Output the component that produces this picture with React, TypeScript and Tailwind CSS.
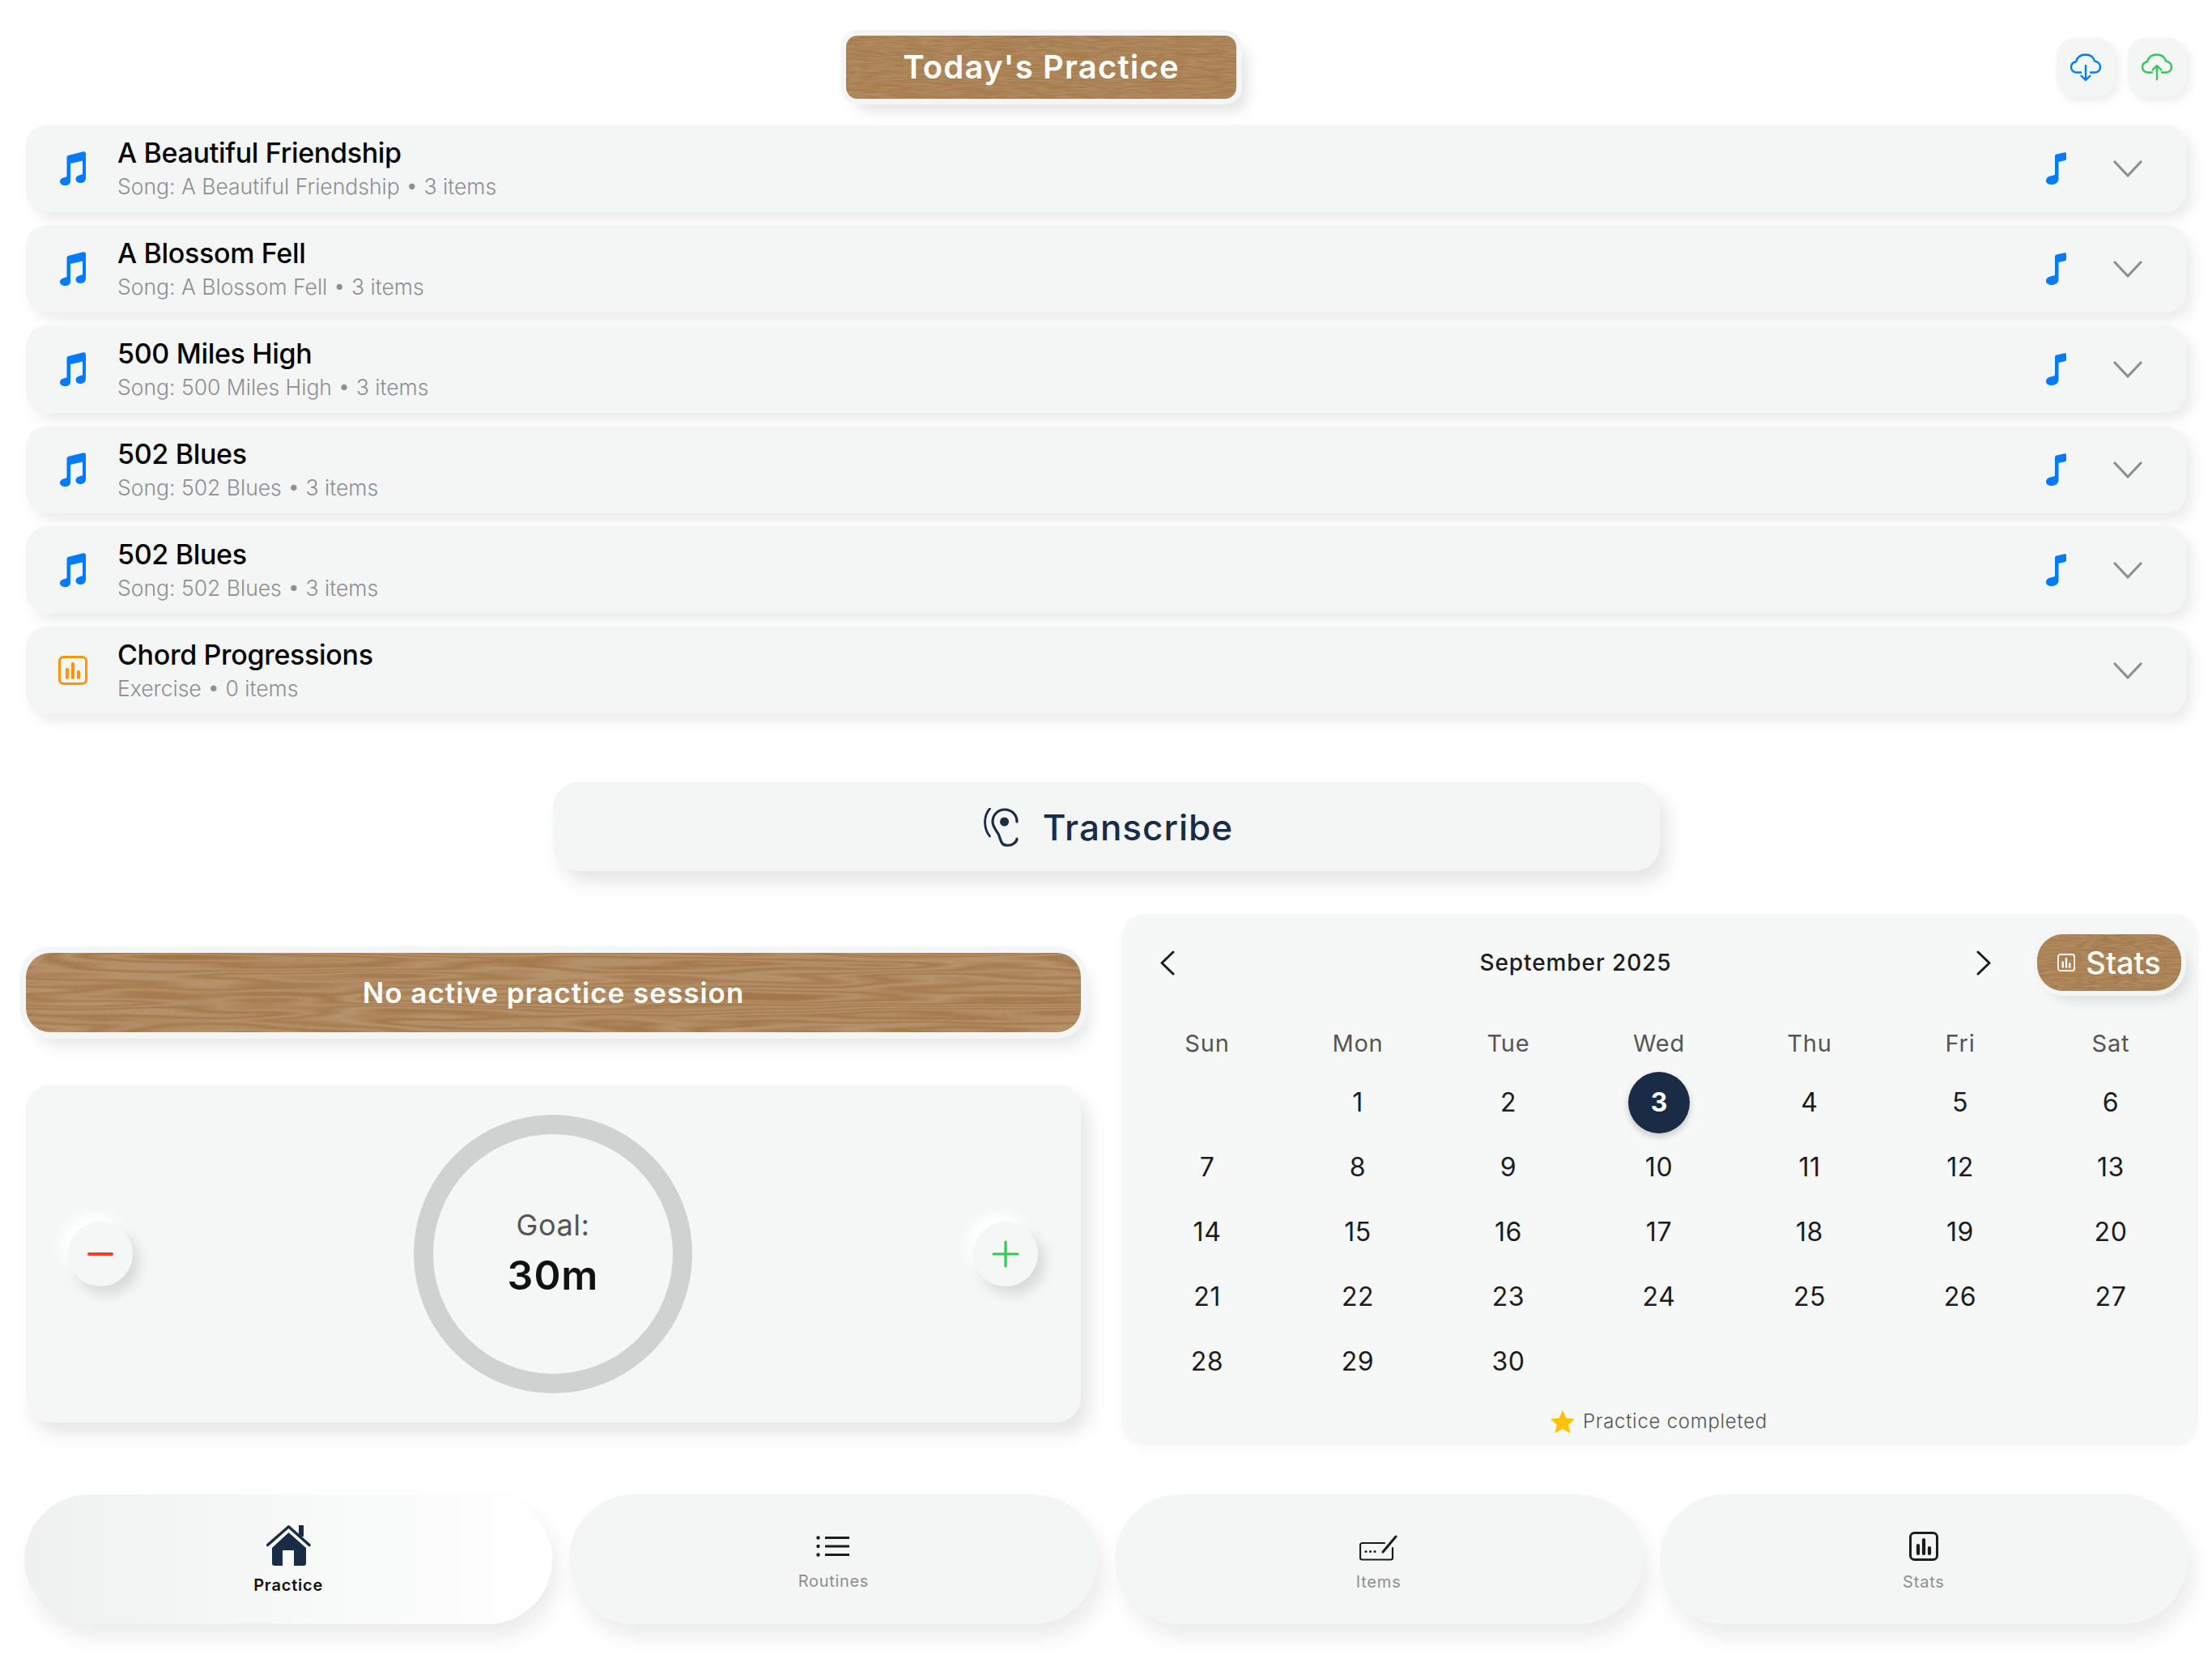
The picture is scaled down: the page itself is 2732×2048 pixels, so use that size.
import React from "react";

const NAVY = "#1a2b45";

const bands = [0, 0, 0, 0.1, 0.9, 0.15, 1, 0.1, 0.85, 0.2, 1, 0.1, 0.9, 0.1, 0.8, 0, 0, 0];
const table = (a: number, b: number) => bands.map((t) => (a + (b - a) * t).toFixed(3)).join(" ");

function Wood({ id, freq, seed, light, octaves }: { id: string; freq: string; seed: number; light: number[]; octaves: number }) {
  const dark = [0.635, 0.47, 0.29];
  return (
    <svg className="absolute inset-0 w-full h-full" aria-hidden="true">
      <filter id={id} x="0" y="0" width="100%" height="100%" colorInterpolationFilters="sRGB">
        <feTurbulence type="fractalNoise" baseFrequency={freq} numOctaves={octaves} seed={seed} />
        <feColorMatrix type="matrix" values="1 0 0 0 0 1 0 0 0 0 1 0 0 0 0 0 0 0 0 1" />
        <feComponentTransfer>
          <feFuncR type="table" tableValues={table(dark[0], light[0])} />
          <feFuncG type="table" tableValues={table(dark[1], light[1])} />
          <feFuncB type="table" tableValues={table(dark[2], light[2])} />
          <feFuncA type="linear" slope={0} intercept={1} />
        </feComponentTransfer>
      </filter>
      <rect width="100%" height="100%" filter={`url(#${id})`} />
    </svg>
  );
}

function DoubleNote() {
  return (
    <svg width="32" height="42" viewBox="0 0 32 42" fill="#007aff" className="shrink-0">
      <path d="M8.5 8C8.5 6.3 9.5 5.2 11 4.8L29 .3C30.6-.1 32 .9 32 2.6V32.5C32 37 28.6 39 25.5 39 22.5 39 19.5 37.5 19.5 34.300 19.500 31.400 21.600 29.900 24.600 29.200L27 28.600C27.600 28.500 28 28 28 27.300V11.500L13 15V37C13 40 10 42 6.500 42 3 42 0 40.500 0 37.300 0 34.400 2.100 32.900 5.100 32.200L7.500 31.600C8.100 31.500 8.500 31 8.500 30.300Z" />
    </svg>
  );
}

function SingleNote() {
  return (
    <svg width="25" height="40" viewBox="0 0 25 40" fill="#007aff" className="shrink-0">
      <path d="M11 5C11 3.600 11.800 2.700 13 2.400L23 .2C24.200 0 25 .7 25 1.900V8C25 9.200 24.300 10 23 10.300L15.500 12V33C15.500 37 11.500 40 7 40 3 40 0 38.300 0 35 0 32 2.200 30.200 5.200 29.500L9.500 28.500C10.500 28.200 11 27.700 11 26.700Z" />
    </svg>
  );
}

function Chevron({ className }: { className?: string }) {
  return (
    <svg width="36" height="21" viewBox="0 0 36 21" fill="none" stroke="#8e8e93" strokeWidth="3.2" strokeLinecap="round" strokeLinejoin="round" className={className}>
      <path d="M2 2 18 19 34 2" />
    </svg>
  );
}

function ChartIcon({ size, color, stroke }: { size: number; color: string; stroke: number }) {
  return (
    <svg width={size} height={size} viewBox="0 0 36 36" fill="none" stroke={color} strokeWidth={stroke} strokeLinecap="round" className="shrink-0">
      <rect x="1.500" y="1.500" width="33" height="33" rx="5" />
      <path d="M11 17v10M18 10v17M25 20v7" strokeWidth={stroke * 1.4} />
    </svg>
  );
}

const CLOUD = "M13 23.500H8C4 23.500 1 20.500 1 17 1 13.500 3.500 11 7 10.300 8.500 4.500 13 1.500 19 1.500 24.500 1.500 28.500 4.500 30 9.500 34 10 37 13 37 16.800 37 20.500 34 23.500 30 23.500H25";

function CloudButton({ color, up }: { color: string; up?: boolean }) {
  return (
    <div className="w-[72px] h-[72px] rounded-[22px] bg-[#f4f6f6] shadow-[5px_6px_12px_rgba(0,0,0,0.07)] flex items-center justify-center">
      <svg width="38" height="35" viewBox="0 0 38 35" fill="none" stroke={color} strokeWidth="2.400" strokeLinecap="round" strokeLinejoin="round">
        <path d={CLOUD} />
        {up ? <path d="M19 33V15M13 21l6-6 6 6" strokeLinecap="butt" /> : <path d="M19 14V33M13 27l6 6 6-6" strokeLinecap="butt" />}
      </svg>
    </div>
  );
}

function EarIcon() {
  return (
    <svg width="43" height="48" viewBox="0 0 43 48" fill="none" stroke={NAVY} strokeWidth="3.200" strokeLinecap="round" className="shrink-0">
      <path d="M41 17C41 8 34 2 26 2 17 2 11 9 11 17 11 23 15 27 18 32 20 36 20 40 23 44 26 47 33 47 37 44 40 42 41 40 41 38" />
      <path d="M7.500 1C3 6 1.500 12 1.500 17.500 1.500 24 3.500 30 7.500 35" strokeWidth="2.800" />
      <circle cx="25.500" cy="17" r="5.500" fill={NAVY} stroke="none" />
    </svg>
  );
}

function HouseIcon() {
  return (
    <svg width="55" height="50" viewBox="0 0 55 50" className="shrink-0">
      <path d="M27.500 9 7 28V47C7 49 8 50 10 50H20V31H34V50H46C48 50 49 49 49 47V28Z" fill={NAVY} />
      <path d="M1.500 24.500 27.500 1.800 53 24.500" fill="none" stroke={NAVY} strokeWidth="3.400" strokeLinecap="round" strokeLinejoin="round" />
      <rect x="40" y="0" width="6" height="14" fill={NAVY} />
    </svg>
  );
}

function ListIcon() {
  return (
    <svg width="42" height="26" viewBox="0 0 42 26" fill="none" stroke="#1c1c1e" strokeWidth="3" className="shrink-0">
      <path d="M11 2.500H41M11 13H41M11 23.500H41" />
      <circle cx="2.500" cy="2.500" r="2.200" fill="#1c1c1e" stroke="none" />
      <circle cx="2.500" cy="13" r="2.200" fill="#1c1c1e" stroke="none" />
      <circle cx="2.500" cy="23.500" r="2.200" fill="#1c1c1e" stroke="none" />
    </svg>
  );
}

function ItemsIcon() {
  return (
    <svg width="48" height="32" viewBox="0 0 48 32" fill="none" stroke="#1c1c1e" strokeWidth="2.200" strokeLinecap="round" className="shrink-0">
      <path d="M31 10H3.500C2 10 1 11 1 12.500V28C1 29.500 2 30.500 3.500 30.500H38.500C40 30.500 41 29.500 41 28V16" />
      <path d="M29 21 45 2" strokeWidth="3" />
      <circle cx="8" cy="20.500" r="1.500" fill="#1c1c1e" stroke="none" />
      <circle cx="13.500" cy="20.500" r="1.500" fill="#1c1c1e" stroke="none" />
      <circle cx="19" cy="20.500" r="1.500" fill="#1c1c1e" stroke="none" />
    </svg>
  );
}

const rows = [
  { title: "A Beautiful Friendship", sub: "Song: A Beautiful Friendship", count: "3 items", song: true },
  { title: "A Blossom Fell", sub: "Song: A Blossom Fell", count: "3 items", song: true },
  { title: "500 Miles High", sub: "Song: 500 Miles High", count: "3 items", song: true },
  { title: "502 Blues", sub: "Song: 502 Blues", count: "3 items", song: true },
  { title: "502 Blues", sub: "Song: 502 Blues", count: "3 items", song: true },
  { title: "Chord Progressions", sub: "Exercise", count: "0 items", song: false },
];

const weekdays = ["Sun", "Mon", "Tue", "Wed", "Thu", "Fri", "Sat"];
const days: (number | null)[] = [null, ...Array.from({ length: 30 }, (_, i) => i + 1)];

const navShadow = "shadow-[8px_16px_26px_rgba(0,0,0,0.08),-6px_-6px_14px_#ffffff]";

export default function App() {
  return (
    <div className="w-[2732px] h-[2048px] bg-white pt-[44px] px-[32px] overflow-hidden font-['Inter',sans-serif] text-black">
      <header className="flex items-center h-[78px]">
        <div className="relative ml-[1013px] w-[482px] h-[78px] rounded-[14px] shadow-[0_0_0_7px_#f4f6f6,12px_14px_18px_rgba(0,0,0,0.12)] flex items-center justify-center">
          <div className="absolute inset-0 rounded-[14px] overflow-hidden">
            <Wood id="woodTitle" freq="0.006 0.2" seed={11} octaves={3} light={[0.7, 0.56, 0.39]} />
          </div>
          <span className="relative text-[40px] font-semibold tracking-[1.2px] text-white">Today's Practice</span>
        </div>
        <div className="ml-auto flex gap-[16px]">
          <CloudButton color="#007aff" />
          <CloudButton color="#34c759" up />
        </div>
      </header>

      <section className="mt-[32px] flex flex-col gap-[16px]">
        {rows.map((r, i) => (
          <div key={i} className="h-[108px] rounded-[26px] bg-[#f4f6f6] shadow-[8px_9px_16px_rgba(0,0,0,0.08)] flex items-center">
            <div className="w-[113px] flex justify-center">
              <div className="ml-[2px] flex">
                {r.song ? <DoubleNote /> : <ChartIcon size={36} color="#ff9500" stroke={3} />}
              </div>
            </div>
            <div className="flex flex-col -mt-[1px]">
              <span className="text-[34px] leading-[44px] font-medium tracking-[-0.32px]">{r.title}</span>
              <span className="mt-[1px] text-[26.5px] leading-[36px] text-[#8e8e93] font-light">
                {r.sub} • {r.count}
              </span>
            </div>
            <div className="ml-auto flex items-center pr-[54px]">
              {r.song && <SingleNote />}
              <Chevron className="ml-[58px]" />
            </div>
          </div>
        ))}
      </section>

      <button className="mt-[84px] mx-auto w-[1367px] h-[110px] rounded-[32px] bg-[#f4f6f6] shadow-[10px_14px_22px_rgba(0,0,0,0.1)] flex items-center justify-center gap-[30px] pl-[6px] pt-[2px]">
        <EarIcon />
        <span className="text-[44px] font-medium tracking-[1px] text-[#1a2b45]">Transcribe</span>
      </button>

      <section className="mt-[53px] flex">
        <div className="w-[1303px] pt-[48px] shrink-0">
          <div className="relative h-[98px] rounded-[30px] shadow-[0_0_0_8px_#f4f6f6,10px_16px_20px_rgba(0,0,0,0.1)] flex items-center justify-center">
            <div className="absolute inset-0 rounded-[30px] overflow-hidden">
              <Wood id="woodBar" freq="0.002 0.03" seed={5} octaves={3} light={[0.72, 0.58, 0.43]} />
            </div>
            <span className="relative text-[35px] font-semibold tracking-[1px] text-white">No active practice session</span>
          </div>
          <div className="mt-[65px] h-[417px] rounded-[30px] bg-[#f5f7f7] shadow-[10px_14px_22px_rgba(0,0,0,0.1)] flex items-center justify-between pl-[52px] pr-[53px]">
            <div className="w-[80px] h-[80px] rounded-full bg-[#f5f7f7] shadow-[8px_10px_16px_rgba(0,0,0,0.12),-8px_-10px_16px_#ffffff] flex items-center justify-center">
              <div className="w-[32px] h-[4px] rounded-full bg-[#ff3b30]" />
            </div>
            <div className="w-[344px] h-[344px] rounded-full border-[24px] border-[#d0d2d1] flex flex-col items-center justify-center">
              <span className="text-[36px] leading-[44px] text-[#555555] tracking-[0.6px]">Goal:</span>
              <span className="mt-[9px] text-[50px] leading-[62px] font-semibold tracking-[1px] text-[#111111]">30m</span>
            </div>
            <div className="w-[80px] h-[80px] rounded-full bg-[#f5f7f7] shadow-[8px_10px_16px_rgba(0,0,0,0.12),-8px_-10px_16px_#ffffff] flex items-center justify-center">
              <svg width="34" height="34" viewBox="0 0 34 34" stroke="#34c759" strokeWidth="3.200" strokeLinecap="round">
                <path d="M17 2V32M2 17H32" />
              </svg>
            </div>
          </div>
        </div>

        <div className="ml-[50px] w-[1330px] -mr-[15px] shrink-0 h-[657px] rounded-[30px] bg-[#f6f8f8] shadow-[0_4px_14px_rgba(0,0,0,0.025)] pt-[25px] pl-[13px]">
          <div className="flex items-center h-[70px] pl-[22px]">
            <div className="w-[44px] flex justify-center">
              <svg width="18" height="31" viewBox="0 0 18 31" fill="none" stroke="#1c1c1e" strokeWidth="3" strokeLinecap="round" strokeLinejoin="round">
                <path d="M16 2 2 15.500 16 29" />
              </svg>
            </div>
            <div className="flex-1 text-center text-[28px] font-medium tracking-[0.9px] text-[#1c1c1e]">September 2025</div>
            <div className="w-[44px] flex justify-center">
              <svg width="18" height="31" viewBox="0 0 18 31" fill="none" stroke="#1c1c1e" strokeWidth="3" strokeLinecap="round" strokeLinejoin="round">
                <path d="M2 2 16 15.500 2 29" />
              </svg>
            </div>
            <div className="relative ml-[44px] mr-[21px] w-[178px] h-[70px] rounded-[32px] shadow-[0_0_0_6px_#f4f6f6,10px_12px_16px_rgba(0,0,0,0.1)] flex items-center justify-center gap-[13px]">
              <div className="absolute inset-0 rounded-[32px] overflow-hidden">
                <Wood id="woodStats" freq="0.008 0.22" seed={3} octaves={3} light={[0.7, 0.56, 0.39]} />
              </div>
              <span className="relative flex"><ChartIcon size={22} color="#ffffff" stroke={2.800} /></span>
              <span className="relative text-[38px] leading-none font-medium text-white">Stats</span>
            </div>
          </div>

          <div className="mt-[45px] grid grid-cols-7 w-[1302px]">
            {weekdays.map((d) => (
              <div key={d} className="h-[40px] flex items-center justify-center text-[29px] tracking-[0.8px] text-[#555555]">{d}</div>
            ))}
          </div>
          <div className="mt-[13px] grid grid-cols-7 w-[1302px] auto-rows-[80px]">
            {days.map((d, i) => (
              <div key={i} className="flex items-center justify-center">
                {d === 3 ? (
                  <div className="w-[76px] h-[76px] rounded-full bg-[#1a2b45] shadow-[0_4px_8px_rgba(0,0,0,0.2)] flex items-center justify-center text-[32px] font-bold text-white">3</div>
                ) : (
                  <span className="text-[32px] tracking-[0.6px] text-[#1c1c1e]">{d}</span>
                )}
              </div>
            ))}
          </div>
          <div className="mt-[16px] w-[1302px] flex items-center justify-center gap-[10px]">
            <svg width="30" height="28" viewBox="0 0 30 28" fill="#ffc107" stroke="#ffc107" strokeWidth="1.500" strokeLinejoin="round">
              <path d="M15 1.500 19 10.500 28.500 11.300 21.200 17.600 23.500 27 15 22 6.500 27 8.800 17.600 1.500 11.300 11 10.500Z" />
            </svg>
            <span className="text-[24px] font-light tracking-[0.72px] text-[#555555]">Practice completed</span>
          </div>
        </div>
      </section>

      <nav className="mt-[60px] -mx-[2px] grid grid-cols-4 gap-[21px] h-[160px]">
        <div className={`rounded-[80px] bg-gradient-to-r from-[#eff1f1] to-[#ffffff] ${navShadow} flex flex-col items-center pt-[38px]`}>
          <HouseIcon />
          <span className="mt-[12px] text-[20px] leading-[24px] font-semibold tracking-[0.8px] text-[#111111]">Practice</span>
        </div>
        <div className={`rounded-[80px] bg-[#f4f6f6] ${navShadow} flex flex-col items-center pt-[51px]`}>
          <ListIcon />
          <span className="mt-[18px] text-[20px] leading-[24px] tracking-[0.7px] text-[#8e8e93]">Routines</span>
        </div>
        <div className={`rounded-[80px] bg-[#f4f6f6] ${navShadow} flex flex-col items-center pt-[50px]`}>
          <ItemsIcon />
          <span className="mt-[14px] text-[20px] leading-[24px] tracking-[0.8px] text-[#8e8e93]">Items</span>
        </div>
        <div className={`rounded-[80px] bg-[#f4f6f6] ${navShadow} flex flex-col items-center pt-[46px]`}>
          <ChartIcon size={36} color="#1c1c1e" stroke={3} />
          <span className="mt-[14px] text-[20px] leading-[24px] tracking-[0.8px] text-[#8e8e93]">Stats</span>
        </div>
      </nav>
    </div>
  );
}
